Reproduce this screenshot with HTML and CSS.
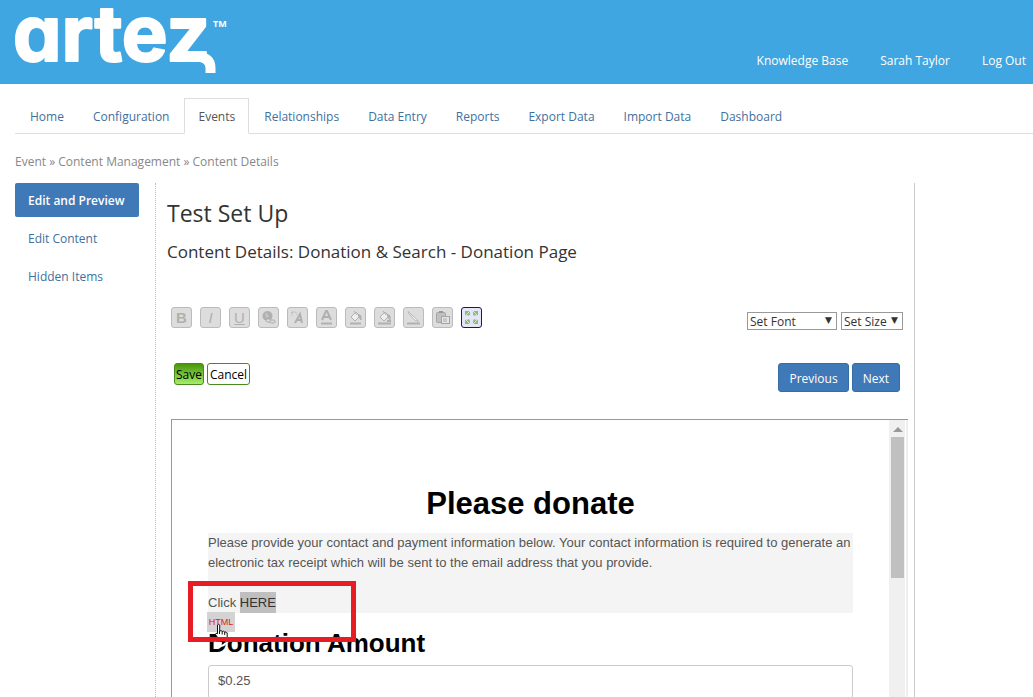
FILE: index.html
```html
<!DOCTYPE html>
<html lang="en">
<head>
    <meta charset="utf-8">
    <meta name="viewport" content="width=device-width, initial-scale=1">
    <title>Content Details</title>
    <link rel="stylesheet" href="styles.css">
</head>
<body>
    <header class="header">
        <a href="#" class="logo">
            <svg width="220" height="72" viewBox="0 0 220 72">
                <text class="logo-text" x="-2" y="53">artez</text>
                <path d="M170 48.500H181Q195.500 49 195.500 60" fill="none" stroke="#fff" stroke-width="10" stroke-linecap="square"/>
                <text class="logo-tm" x="198" y="19">TM</text>
            </svg>
        </a>
        <nav class="user-links">
            <a href="#">Knowledge Base</a>
            <a href="#">Sarah Taylor</a>
            <a href="#">Log Out</a>
        </nav>
    </header>

    <nav class="tabs">
        <a href="#">Home</a>
        <a href="#">Configuration</a>
        <a href="#" class="active">Events</a>
        <a href="#">Relationships</a>
        <a href="#">Data Entry</a>
        <a href="#">Reports</a>
        <a href="#">Export Data</a>
        <a href="#">Import Data</a>
        <a href="#">Dashboard</a>
    </nav>

    <div class="breadcrumb">Event » Content Management » Content Details</div>

    <div class="main">
        <nav class="sidebar">
            <a href="#" class="active">Edit and Preview</a>
            <a href="#">Edit Content</a>
            <a href="#">Hidden Items</a>
        </nav>

        <div class="content">
            <h1>Test Set Up</h1>
            <h2>Content Details: Donation &amp; Search - Donation Page</h2>

            <div class="editor">
                <div class="toolbar">
                    <div class="tools">
                        <button class="tool" aria-label="Bold"><b>B</b></button>
                        <button class="tool" aria-label="Italic"><i>I</i></button>
                        <button class="tool" aria-label="Underline"><u>U</u></button>
                        <button class="tool" aria-label="Link">
                            <svg viewBox="0 0 19 19"><circle cx="8.500" cy="8" r="5" fill="#b0b0b0"/><path d="M6 5l3 1 1 3-3 1z" fill="#c4c4c4"/><rect x="7" y="11" width="5" height="3" rx="1.5" fill="#ddd" stroke="#aaa"/><rect x="11" y="12" width="5" height="3" rx="1.5" fill="#ddd" stroke="#aaa"/></svg>
                        </button>
                        <button class="tool" aria-label="Text style">
                            <svg viewBox="0 0 19 19"><path d="M4 4v4M4 4h3q2 0 2 3" fill="none" stroke="#b5b5b5" stroke-dasharray="2 1"/><path d="M7 15l5-9 2 9M9 12h5" fill="none" stroke="#b0b0b0" stroke-width="2"/></svg>
                        </button>
                        <button class="tool" aria-label="Text colour">
                            <svg viewBox="0 0 19 19"><path d="M5 12l4-9h1l4 9M7 9h5" fill="none" stroke="#b0b0b0" stroke-width="2"/><path d="M4 15.500h11" stroke="#b0b0b0" stroke-width="2"/></svg>
                        </button>
                        <button class="tool" aria-label="Fill colour">
                            <svg viewBox="0 0 19 19"><path d="M5 9l5-5 4 4-5 5z" fill="#eee" stroke="#b0b0b0"/><path d="M8 3l3 4M12 6l3 2v4l-2-3z" fill="#b0b0b0" stroke="#b0b0b0"/><path d="M4 15.500h11" stroke="#b0b0b0" stroke-width="2"/></svg>
                        </button>
                        <button class="tool" aria-label="Background colour">
                            <svg viewBox="0 0 19 19"><path d="M5 9l5-5 4 4-5 5z" fill="#eee" stroke="#b0b0b0"/><path d="M8 3l3 4M12 6l3 2v4l-2-3z" fill="#b0b0b0" stroke="#b0b0b0"/><path d="M3 15.500h13M12 13h4" stroke="#b0b0b0" stroke-width="2"/></svg>
                        </button>
                        <button class="tool" aria-label="Pen colour">
                            <svg viewBox="0 0 19 19"><path d="M4 3.500l8 7 2.500 3-4-1.500-6-7z" fill="#f5f5f5" stroke="#b8b8b8"/><path d="M3 15.500h13" stroke="#b0b0b0" stroke-width="2"/></svg>
                        </button>
                        <button class="tool" aria-label="Paste">
                            <svg viewBox="0 0 19 19"><rect x="3.500" y="4.500" width="9" height="10" rx="1" fill="#c0c0c0" stroke="#a5a5a5"/><path d="M6 4h4" stroke="#999" stroke-width="2"/><rect x="8.500" y="8.500" width="8" height="7" fill="#e5e5e5" stroke="#a5a5a5"/><path d="M10 11h4M10 13h4" stroke="#aaa"/></svg>
                        </button>
                        <button class="tool on" aria-label="Full screen">
                            <svg viewBox="0 0 19 19"><path d="M3 3h5v3l-1 2-2-1-2 1zM16 3v5l-2-1-2 1-1-2V3zM3 16v-5l2 1 2-1 1 2v3zM16 16h-5v-3l1-2 2 1 2-1z" fill="#8abb84"/><path d="M3 8l5-5M16 8l-5-5M3 11l5 5M16 11l-5 5" stroke="#d5e8d5"/></svg>
                        </button>
                    </div>
                    <div class="selects">
                        <label class="select font"><select aria-label="Set Font"><option>Set Font</option></select></label>
                        <label class="select size"><select aria-label="Set Size"><option>Set Size</option></select></label>
                    </div>
                </div>

                <div class="actions">
                    <div class="save-cancel">
                        <button class="save">Save</button>
                        <button class="cancel">Cancel</button>
                    </div>
                    <div class="pager">
                        <button>Previous</button>
                        <button>Next</button>
                    </div>
                </div>

                <div class="preview">
                    <div class="page">
                        <h3>Please donate</h3>
                        <div class="message">
                            <p>Please provide your contact and payment information below. Your contact information is required to generate an electronic tax receipt which will be sent to the email address that you provide.</p>
                            <p>Click <mark>HERE</mark></p>
                            <button class="html-btn">HTML</button>
                            <div class="callout"></div>
                            <svg class="cursor" width="16" height="26" viewBox="0 0 16 26">
                                <path d="M3.500 2q1.200-1.500 2.200 0V8q1.500-1 2.500.5 1.500-.8 2.500.5 1.800-.5 2.500 1v4.500l-2 3.500H6l-4.500-6.500q0-2 2-.8z" fill="#fff" stroke="#111"/>
                                <path d="M5.500 8v3M8.200 8.500v3M10.700 9v3" stroke="#111"/>
                                <path d="M-1 14h16v4h-16z" fill="#e71d25"/>
                                <path d="M1 19q5 8 11 1" fill="none" stroke="#fff" stroke-width="2"/>
                            </svg>
                        </div>
                        <h4><label for="amount">Donation Amount</label></h4>
                        <input type="text" id="amount" class="amount" value="$0.25">
                    </div>
                    <div class="scrollbar">
                        <div class="arrow"></div>
                        <div class="thumb"></div>
                    </div>
                </div>
            </div>
        </div>
    </div>
</body>
</html>
```
FILE: styles.css
```css
* {
    box-sizing: border-box;
}
body {
    display: flex;
    flex-direction: column;
    height: 100vh;
    margin: 0;
    overflow: hidden;
    background: #fff;
    color: #333;
    font: 12px/20px "Open Sans", sans-serif;
}
a {
    color: #42709c;
    text-decoration: none;
}
button, select, input {
    font-family: inherit;
}

/* header */
.header {
    display: flex;
    flex: none;
    justify-content: space-between;
    height: 84px;
    padding: 8px 7px 0 15px;
    background: #3fa6e1;
}
.logo svg {
    display: block;
    overflow: visible;
}
.logo-text {
    fill: #fff;
    stroke: #fff;
    stroke-width: 2px;
    stroke-linejoin: round;
    font: 700 77px Inter, sans-serif;
    font-feature-settings: "cv11";
}
.logo-tm {
    fill: #fff;
    font: bold 9px "Open Sans", sans-serif;
}
.user-links {
    display: flex;
    gap: 32px;
    padding-top: 43px;
}
.user-links a {
    color: #fff;
}

/* tabs */
.tabs {
    display: flex;
    flex: none;
    gap: 1px;
    margin: 14px 0 0 15px;
    padding-left: 1px;
    border-bottom: 1px solid #ddd;
}
.tabs a {
    height: 36px;
    margin-bottom: -1px;
    padding: 8px 13px;
    border: 1px solid transparent;
}
.tabs a.active {
    border-color: #ddd;
    border-bottom-color: #fff;
    color: #555;
}
.breadcrumb {
    flex: none;
    padding: 18px 15px 11px;
    color: #888;
}

/* main columns */
.main {
    display: flex;
    flex: 1;
    min-height: 0;
    padding: 0 118px 0 15px;
}
.sidebar {
    display: flex;
    flex: none;
    flex-direction: column;
    gap: 4px;
    width: 124px;
    margin-right: 16px;
}
.sidebar a {
    padding: 8px 13px 6px;
    border-radius: 2px;
    white-space: nowrap;
}
.sidebar a.active {
    background: #4079b8;
    color: #fff;
    font-weight: 600;
}
.content {
    display: flex;
    flex: 1;
    flex-direction: column;
    min-width: 0;
    padding: 15px 6px 0 11px;
    border-left: 1px dotted #bbb;
    border-right: 1px solid #ccc;
}
h1 {
    margin: 0 0 11px;
    font-size: 23px;
    font-weight: 400;
    line-height: 30px;
}
h2 {
    margin: 0;
    font-size: 17px;
    font-weight: 400;
    line-height: 26px;
}

/* editor */
.editor {
    display: flex;
    flex: 1;
    flex-direction: column;
    min-height: 0;
    margin: 42px 0 0 4px;
}
.toolbar, .actions {
    display: flex;
    flex: none;
    justify-content: space-between;
}
.toolbar {
    padding-right: 5px;
}
.tools {
    display: flex;
    gap: 8px;
}
.tool {
    width: 21px;
    height: 21px;
    padding: 0;
    border: 1px solid #bbb;
    border-radius: 3px;
    background: #ddd;
    color: #b0b0b0;
    font: 15px/18px "Liberation Sans", Arial, sans-serif;
}
.tool svg {
    display: block;
    width: 19px;
    height: 19px;
}
.tool.on {
    border-color: #15157a;
    background: #e4e6f4;
}
.selects {
    display: flex;
    gap: 4px;
    padding-top: 5px;
}
.select {
    position: relative;
    height: 18px;
}
.select.font {
    width: 90px;
}
.select.size {
    width: 62px;
}
.select select {
    display: block;
    width: 100%;
    height: 18px;
    padding: 1px 2px 0;
    appearance: none;
    border: 1px solid #999;
    border-radius: 0;
    background: #fff;
    color: #333;
    font-size: 12px;
    line-height: 16px;
}
.select::after {
    content: "▼";
    position: absolute;
    top: 0;
    right: 5px;
    font: 9px/16px "DejaVu Sans", sans-serif;
    pointer-events: none;
}
.actions {
    align-items: flex-start;
    padding: 33px 8px 27px 3px;
}
.save-cancel, .pager {
    display: flex;
    gap: 3px;
}
.save-cancel button {
    height: 22px;
    padding: 0 2px;
    border: 1px solid #4a8a1c;
    border-radius: 3px;
    background: #fff;
    color: #000;
    font-size: 12px;
}
.save-cancel .save {
    padding: 0 1px;
    background: linear-gradient(#48960a, #a5ee68);
}
.pager button {
    height: 29px;
    padding: 2px 10px 0;
    border: 1px solid #386ca5;
    border-radius: 3px;
    background: #4079b8;
    color: #fff;
    font-size: 12px;
}

/* page preview */
.preview {
    display: flex;
    flex: 1;
    min-height: 0;
    overflow: hidden;
    border: solid #999;
    border-width: 1px 0 0 1px;
    color: #555;
    font-family: "Liberation Sans", Arial, sans-serif;
}
.page {
    flex: 1;
    padding: 64px 36px 0;
}
h3, h4 {
    margin: 0;
    color: #000;
    font-weight: bold;
}
h3 {
    margin-bottom: 9px;
    font-size: 31px;
    line-height: 40px;
    text-align: center;
}
h4 {
    padding: 12px 0 4px;
    font-size: 26px;
    line-height: 36px;
}
.message {
    position: relative;
    height: 80px;
    background: #f4f4f4;
    font-size: 13px;
}
.message p {
    margin: 0 0 20px;
}
.message mark {
    padding: 3px 0;
    background: #bfbfbf;
    color: #333;
}
.html-btn {
    position: absolute;
    top: 79px;
    left: -1px;
    width: 28px;
    height: 20px;
    padding: 0;
    border: 0;
    background: #d3d3d3;
    color: #e02020;
    font-size: 9px;
}
.callout {
    position: absolute;
    top: 48px;
    left: -20px;
    width: 168px;
    height: 61px;
    border: 5px solid #e71d25;
}
.cursor {
    position: absolute;
    top: 90px;
    left: 6px;
}
.amount {
    display: block;
    width: 100%;
    height: 34px;
    padding: 0 9px 3px;
    border: 1px solid #ccc;
    border-radius: 3px;
    color: #555;
    font-size: 13px;
}
.scrollbar {
    flex: none;
    width: 19px;
    padding-left: 2px;
    border-right: 2px solid #eee;
    background: linear-gradient(to right, #f0f0f0 16px, #fff 16px);
}
.arrow {
    width: 0;
    margin: 7px 0 5px 2px;
    border: solid transparent;
    border-width: 0 5px 5px;
    border-bottom-color: #999;
}
.thumb {
    width: 13px;
    height: 141px;
    background: #c0c0c0;
}
```
